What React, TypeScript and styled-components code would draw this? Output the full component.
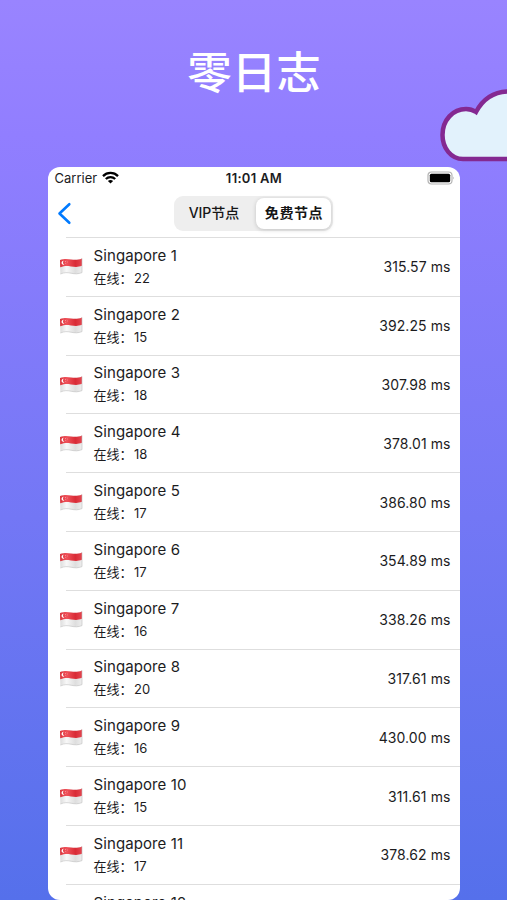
import React from 'react';
import styled, { createGlobalStyle } from 'styled-components';

const GlobalStyle = createGlobalStyle`
  * { box-sizing: border-box; }
  body { margin: 0; overflow: hidden; font-family: Inter, "Noto Sans CJK SC", sans-serif; }
`;

const Poster = styled.main`
  position: relative;
  width: 507px;
  height: 900px;
  overflow: hidden;
  display: flex;
  flex-direction: column;
  align-items: center;
  background: linear-gradient(180deg, #9984ff 0%, #917eff 15%, #5570eb 100%);
`;

const Headline = styled.h1`
  margin: 0;
  height: 167px;
  flex: none;
  padding: 38px 0 0 1px;
  color: #fff;
  font: 500 44.5px/64px "Noto Sans CJK SC", sans-serif;
`;

const Cloud = styled.svg`
  position: absolute;
  top: 80px;
  right: 0;
  width: 75px;
  height: 85px;
`;

const Screen = styled.section`
  width: 412px;
  height: 733px;
  flex: none;
  overflow: hidden;
  border-radius: 12px;
  background: #fff;
  color: #1c1c1e;
`;

const StatusBar = styled.div`
  height: 23px;
  display: grid;
  grid-template-columns: 1fr auto 1fr;
  align-items: center;
  padding: 0 5px 2px 7px;
  font-size: 13px;
`;

const Carrier = styled.div`
  display: flex;
  align-items: center;
  gap: 5px;
  letter-spacing: 0.02px;
`;

const Clock = styled.div`
  font-weight: 600;
  margin-right: 1px;
  letter-spacing: 0.3px;
`;

const Battery = styled.svg`
  justify-self: end;
  width: 28px;
  height: 14px;
`;

const NavBar = styled.header`
  height: 47px;
  display: grid;
  grid-template-columns: 1fr auto 1fr;
  align-items: center;
  padding: 0 1px 0 9px;
`;

const BackButton = styled.button`
  border: 0;
  padding: 0;
  background: none;
  width: 16px;
  height: 24px;
  margin-top: -2px;
`;

const Segmented = styled.div`
  display: flex;
  width: 159px;
  height: 35px;
  margin: 0 8px 1px 0;
  padding: 2px;
  border-radius: 9px;
  background: #eee;
`;

const Segment = styled.button<{ $active?: boolean }>`
  flex: ${p => (p.$active ? '0 0 75px' : '1')};
  border: 0;
  padding: ${p => (p.$active ? '0 0 1px 1px' : '0 4px 1px 0')};
  border-radius: 8px;
  background: ${p => (p.$active ? '#fff' : 'transparent')};
  box-shadow: ${p => (p.$active ? '0 1px 4px rgba(0,0,0,.18)' : 'none')};
  color: #161616;
  font: ${p => (p.$active ? 700 : 500)} 14px/20px Inter, "Noto Sans CJK SC", sans-serif;
  letter-spacing: ${p => (p.$active ? '0.6px' : '0')};
  white-space: nowrap;
`;

const List = styled.ul`
  margin: 0;
  padding: 0;
  list-style: none;
`;

const Row = styled.li`
  height: 58.8px;
  display: grid;
  grid-template-columns: 28px 1fr auto;
  align-items: center;
  padding: 0 9px;
  background: linear-gradient(#dedede, #dedede) 18px 0 / 100% 1px no-repeat;
`;

const Details = styled.div`
  height: 45px;
  padding: 1px 0 0 9px;
`;

const Name = styled.div`
  font-size: 15px;
  line-height: 22px;
  letter-spacing: 0.1px;
`;

const Online = styled.div`
  font-size: 13px;
  line-height: 22px;
`;

const Count = styled.span`
  margin-left: 1.5px;
`;

const Latency = styled.div`
  padding-top: 1px;
  font-size: 14px;
  letter-spacing: 0.08px;
`;

const FlagSvg = styled.svg`
  width: 28px;
  height: 22px;
`;

const Flag = () => (
  <FlagSvg viewBox="0 0 28 22">
    <defs>
      <linearGradient id="red" x1="0" x2="1">
        <stop offset="0" stopColor="#d9343d" />
        <stop offset=".3" stopColor="#f0525a" />
        <stop offset=".7" stopColor="#d92b36" />
        <stop offset="1" stopColor="#e54650" />
      </linearGradient>
      <linearGradient id="white" x1="0" x2="1">
        <stop offset="0" stopColor="#dcdcdc" />
        <stop offset=".3" stopColor="#f8f8f8" />
        <stop offset=".7" stopColor="#dedede" />
        <stop offset="1" stopColor="#eee" />
      </linearGradient>
    </defs>
    <path d="M3 5C8 3.5 10 3.8 14 4.4S21 5 25 3.4V17.6C21 19.2 18 19 14 18.2S8 17.2 3.4 19Z" fill="url(#white)" />
    <path d="M3 5C8 3.5 10 3.8 14 4.4S21 5 25 3.4V10.8C21 12.3 18 12 14 11.4S8 10.6 3.2 12.2Z" fill="url(#red)" />
    <path d="M3.4 19C8 17.2 10 17.4 14 18.2S21 19.2 25 17.6V3.4" fill="none" stroke="#bdbdbd" strokeWidth=".6" />
    <path d="M6.7 5.8A2 2 0 1 0 7.4 9.6A2.3 2.3 0 0 1 6.7 5.8Z" fill="#fff" />
    <path d="M8 6.6h1M10 7h.7M8.4 8.5h.7" stroke="#f9c5c8" strokeWidth=".6" />
  </FlagSvg>
);

interface Server {
  id: number;
  online?: number;
  latency?: string;
}

const servers: Server[] = [
  { id: 1, online: 22, latency: '315.57' },
  { id: 2, online: 15, latency: '392.25' },
  { id: 3, online: 18, latency: '307.98' },
  { id: 4, online: 18, latency: '378.01' },
  { id: 5, online: 17, latency: '386.80' },
  { id: 6, online: 17, latency: '354.89' },
  { id: 7, online: 16, latency: '338.26' },
  { id: 8, online: 20, latency: '317.61' },
  { id: 9, online: 16, latency: '430.00' },
  { id: 10, online: 15, latency: '311.61' },
  { id: 11, online: 17, latency: '378.62' },
  { id: 12 },
];

export default function App() {
  return (
    <Poster>
      <GlobalStyle />
      <Headline>零日志</Headline>
      <Cloud viewBox="0 0 75 85">
        <path
          d="M90 79H31C19 79 10.5 68 10.5 55C10.5 40 21 29 34 29C38 29 41 30 44 32C51 19 62 11.5 77 11.5H90Z"
          fill="#e2f2fc"
          stroke="#842991"
          strokeWidth="4.5"
        />
      </Cloud>
      <Screen>
        <StatusBar>
          <Carrier>
            Carrier
            <svg width="17" height="13" viewBox="0 0 17 13">
              <g fill="none" stroke="#000" strokeWidth="2.3">
                <path d="M1 5.1C5.2 .9 11.8 .9 16 5.1" />
                <path d="M3.8 8C6.5 5.4 10.5 5.4 13.2 8" />
              </g>
              <path d="M5.9 9.9C7.4 8.6 9.6 8.6 11.1 9.9L8.5 12.5Z" />
            </svg>
          </Carrier>
          <Clock>11:01 AM</Clock>
          <Battery viewBox="0 0 28 14">
            <rect x="1" y="1" width="24" height="12" rx="3.5" fill="#fff" stroke="#b4b4b4" strokeWidth="1.2" />
            <rect x="2.8" y="2.8" width="20.4" height="8.4" rx="1.5" />
            <path d="M26 5.5Q27.5 7 26 8.5Z" fill="#aaa" />
          </Battery>
        </StatusBar>
        <NavBar>
          <BackButton aria-label="返回">
            <svg width="16" height="24" viewBox="0 0 16 24">
              <path d="M12.3 3.2L2.5 12.5L12.3 21.8" fill="none" stroke="#007aff" strokeWidth="2.6" strokeLinecap="round" strokeLinejoin="round" />
            </svg>
          </BackButton>
          <Segmented>
            <Segment>VIP节点</Segment>
            <Segment $active>免费节点</Segment>
          </Segmented>
        </NavBar>
        <List>
          {servers.map(({ id, online, latency }) => (
            <Row key={id}>
              {latency ? <Flag /> : <span />}
              <Details>
                <Name>Singapore {id}</Name>
                {online && (
                  <Online>
                    在线：<Count>{online}</Count>
                  </Online>
                )}
              </Details>
              {latency && <Latency>{latency} ms</Latency>}
            </Row>
          ))}
        </List>
      </Screen>
    </Poster>
  );
}
